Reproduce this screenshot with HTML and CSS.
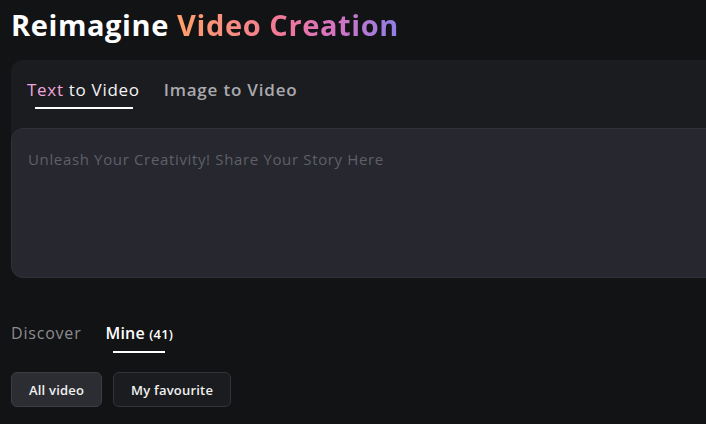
FILE: index.html
```html
<!DOCTYPE html>
<html>
<head>
<meta charset="utf-8">
<link rel="stylesheet" href="styles.css">
</head>
<body>
<div class="page">
  <h1 class="title">Reimagine <span class="grad">Video Creation</span></h1>
  <div class="card">
    <div class="tabs">
      <div class="tab active"><span class="pink">Text</span> to Video</div>
      <div class="tab">Image to Video</div>
    </div>
    <div class="prompt">Unleash Your Creativity! Share Your Story Here</div>
  </div>
  <div class="lib-tabs">
    <div class="lib-tab">Discover</div>
    <div class="lib-tab active">Mine <span class="count">(41)</span></div>
  </div>
  <div class="filters">
    <button class="filter selected">All video</button>
    <button class="filter">My favourite</button>
  </div>
</div>
</body>
</html>
```
FILE: styles.css
```css
html, body {
  margin: 0;
  padding: 0;
  background: #121315;
  width: 706px;
  height: 424px;
  overflow: hidden;
}
body {
  font-family: "Open Sans", "DejaVu Sans", sans-serif;
  color: #fff;
}
.page {
  padding: 0 0 0 11px;
}
.title {
  margin: 0;
  padding-top: 6px;
  height: 46px;
  font-size: 29px;
  font-weight: 700;
  letter-spacing: 0.6px;
  color: #fff;
  line-height: 38px;
}
.grad {
  background: linear-gradient(90deg, #ffa06a 0%, #f27a95 45%, #d873c0 70%, #8e7ee8 100%);
  -webkit-background-clip: text;
  background-clip: text;
  color: transparent;
}
.card {
  margin-top: 8px;
  width: 720px;
  background: #1b1c20;
  border-radius: 12px;
}
.tabs {
  display: flex;
  gap: 24px;
  padding: 0 0 0 16px;
  height: 68px;
  align-items: flex-start;
}
.tab {
  position: relative;
  font-size: 17px;
  color: #a9a9ae;
  font-weight: 600;
  padding-top: 18px;
  line-height: 24px;
  letter-spacing: 0.8px;
}
.tab.active {
  color: #f4f4f4;
  font-weight: 500;
  letter-spacing: 0.7px;
}
.tab.active::after {
  content: "";
  position: absolute;
  left: 8px;
  right: 7px;
  top: 47px;
  height: 2px;
  background: #fff;
}
.pink {
  color: #f0a6dc;
}
.prompt {
  height: 150px;
  box-sizing: border-box;
  background: #26272f;
  border: 1px solid #2f3038;
  border-radius: 12px;
  padding: 19px 16px;
  font-size: 15px;
  color: #5f6068;
  font-weight: 500;
  line-height: 22px;
  letter-spacing: 0.65px;
}
.lib-tabs {
  display: flex;
  gap: 24px;
  margin-top: 43px;
  height: 40px;
}
.lib-tab {
  position: relative;
  font-size: 16px;
  color: #8c8c90;
  line-height: 24px;
  letter-spacing: 0.8px;
}
.lib-tab.active {
  color: #fff;
  font-weight: 600;
  letter-spacing: 0.2px;
}
.lib-tab.active::after {
  content: "";
  position: absolute;
  left: 8px;
  right: 8px;
  top: 30px;
  height: 2px;
  background: #fff;
}
.count {
  font-size: 13px;
  font-weight: 600;
}
.filters {
  display: flex;
  gap: 11px;
  margin-top: 11px;
}
.filter {
  font-family: inherit;
  font-size: 13px;
  font-weight: 600;
  color: #f0f0f0;
  height: 35px;
  padding: 0 17px;
  letter-spacing: 0.2px;
  border-radius: 6px;
  border: 1px solid #34353a;
  background: #1b1c1f;
}
.filter.selected {
  background: #2c2d32;
  border-color: #3c3d42;
}
```
